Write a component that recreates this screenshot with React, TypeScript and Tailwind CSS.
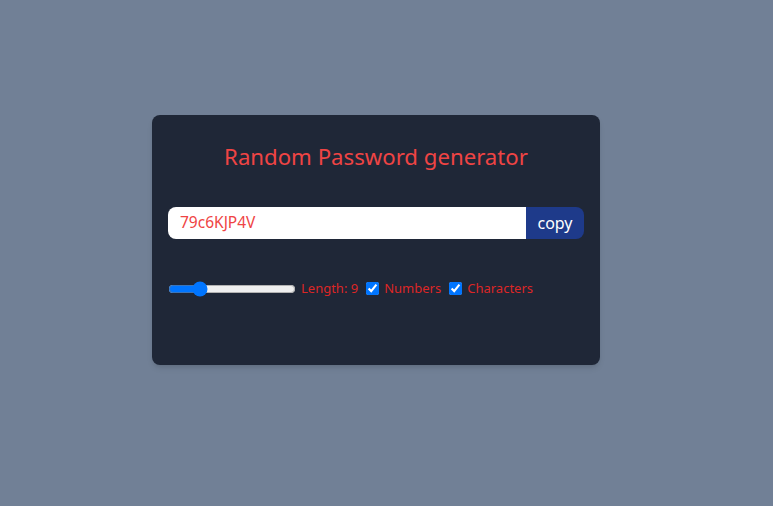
import { useState } from 'react';

export default function App() {
  const [length, setLength] = useState(9);
  const [numbers, setNumbers] = useState(true);
  const [chars, setChars] = useState(true);

  return (
    <div className="min-h-[506px] w-full bg-[#718096] pt-[115px] font-['Noto_Sans',sans-serif]">
      <div className="ml-[152px] h-[250px] w-[448px] rounded-lg bg-[#1f2737] px-4 pt-[26px] shadow-md">
        <h1 className="h-8 text-center text-[22.2px] leading-8 text-[#ef4444]">Random Password generator</h1>
        <div className="mt-[34px] flex h-8 overflow-hidden rounded-lg">
          <input
            type="text"
            readOnly
            value="79c6KJP4V"
            className="w-full bg-white px-3 text-[15.5px] text-[#ef4444] outline-none"
          />
          <button className="w-[58px] shrink-0 bg-[#1e3a8a] text-[16px] text-white">copy</button>
        </div>
        <div className="mt-[40px] flex items-center gap-x-2 text-[13px] text-[#dc2626]">
          <div className="flex items-center gap-x-[5px]">
            <input
              type="range"
              min={6}
              max={20}
              value={length}
              onChange={(e) => setLength(Number(e.target.value))}
              className="m-0 w-[128px] cursor-pointer"
            />
            <label>Length: {length}</label>
          </div>
          <div className="flex items-center gap-x-[5px]">
            <input type="checkbox" checked={numbers} onChange={() => setNumbers(!numbers)} />
            <label>Numbers</label>
          </div>
          <div className="flex items-center gap-x-[5px]">
            <input type="checkbox" checked={chars} onChange={() => setChars(!chars)} />
            <label>Characters</label>
          </div>
        </div>
      </div>
    </div>
  );
}
